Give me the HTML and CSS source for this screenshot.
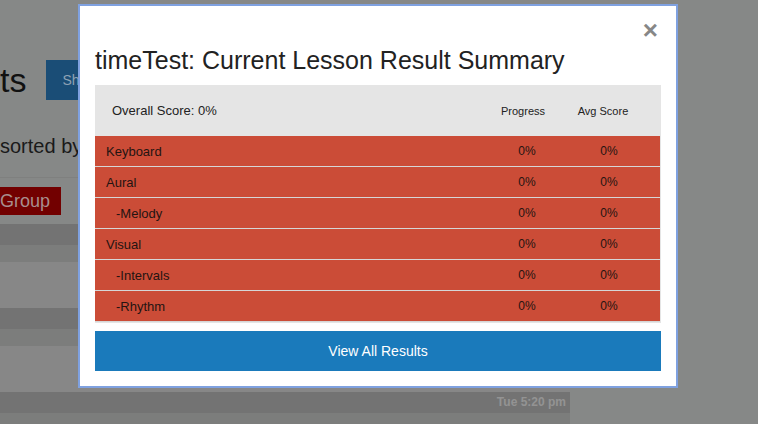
FILE: index.html
```html
<!DOCTYPE html>
<html>
<head>
<meta charset="utf-8">
<link rel="stylesheet" href="styles.css">
</head>
<body>
<div class="page">
  <div class="title-row">
    <h1 class="page-title">ts</h1>
    <button class="show-btn">Show</button>
  </div>
  <p class="sorted">sorted by</p>
  <div class="group-row"><span class="group-btn">Group</span></div>
  <div class="list">
    <div class="bar-dark"></div>
    <div class="bar-mid"></div>
    <div class="bar-body"></div>
    <div class="bar-dark"></div>
    <div class="bar-mid"></div>
    <div class="bar-body"></div>
    <div class="bar-dark stamp">Tue 5:20 pm</div>
    <div class="bar-mid"></div>
  </div>
</div>

<div class="modal">
  <div class="close-row"><span class="close">&times;</span></div>
  <h4 class="modal-title">timeTest: Current Lesson Result Summary</h4>
  <div class="results">
    <div class="res-head">
      <span class="overall">Overall Score: 0%</span>
      <span class="col">Progress</span>
      <span class="col">Avg Score</span>
    </div>
    <div class="res-row"><span class="name">Keyboard</span><span class="val">0%</span><span class="val">0%</span></div>
    <div class="res-row"><span class="name">Aural</span><span class="val">0%</span><span class="val">0%</span></div>
    <div class="res-row"><span class="name sub">-Melody</span><span class="val">0%</span><span class="val">0%</span></div>
    <div class="res-row"><span class="name">Visual</span><span class="val">0%</span><span class="val">0%</span></div>
    <div class="res-row"><span class="name sub">-Intervals</span><span class="val">0%</span><span class="val">0%</span></div>
    <div class="res-row"><span class="name sub">-Rhythm</span><span class="val">0%</span><span class="val">0%</span></div>
  </div>
  <button class="view-all">View All Results</button>
</div>
</body>
</html>
```

FILE: styles.css
```css
html, body {
  margin: 0;
  padding: 0;
  background: #868887;
  font-family: "Liberation Sans", Arial, sans-serif;
  overflow: hidden;
  height: 424px;
}

.page {
  width: 570px;
}

.title-row {
  display: flex;
  align-items: center;
  margin-top: 60px;
  height: 40px;
}

.page-title {
  margin: 0 20px 0 0;
  font-size: 34px;
  font-weight: normal;
  color: #111;
  line-height: 40px;
}

.show-btn {
  height: 40px;
  width: 120px;
  border: none;
  background: #1a4d76;
  color: #8ea2b4;
  font-family: "Liberation Sans", Arial, sans-serif;
  font-size: 14px;
  text-align: left;
  padding: 0 0 0 16px;
}

.sorted {
  margin: 34px 0 0 0;
  font-size: 20px;
  line-height: 24px;
  color: #1a1a1a;
}

.group-row {
  margin-top: 19px;
  border-top: 1px solid #7f807f;
  padding-top: 9px;
}

.group-btn {
  display: inline-block;
  background: #720000;
  color: #a88e8e;
  font-size: 18px;
  line-height: 28px;
  padding: 0 11px 0 0;
}

.list {
  margin-top: 9px;
}

.bar-dark {
  height: 21px;
  background: #737373;
}

.bar-mid {
  height: 17px;
  background: #7c7d7c;
}

.bar-body {
  height: 46px;
  background: #878787;
}

.stamp {
  text-align: right;
  padding-right: 4px;
  font-size: 12px;
  font-weight: bold;
  line-height: 21px;
  color: #939393;
}

/* modal */
.modal {
  position: fixed;
  left: 78px;
  top: 4px;
  width: 600px;
  box-sizing: border-box;
  background: #fff;
  border: 2px solid #7fa1e0;
  padding: 15px;
}

.close-row {
  display: flex;
  justify-content: flex-end;
  height: 20px;
  padding-right: 3px;
}

.close {
  font-size: 26px;
  font-weight: bold;
  color: #878787;
  line-height: 18px;
  margin-top: 0;
}

.modal-title {
  margin: 6px 0 12px 0;
  font-size: 25px;
  font-weight: normal;
  line-height: 26px;
  color: #222;
}

.results {
  background: #e5e5e5;
  padding: 0 1px 1px 0;
}

.res-head {
  display: grid;
  grid-template-columns: 1fr 80px 80px;
  align-items: center;
  height: 51px;
  padding: 0 17px 0 17px;
  font-size: 11px;
  color: #222;
}

.res-head .overall {
  font-size: 13px;
}

.res-head .col {
  text-align: center;
}

.res-row {
  display: grid;
  grid-template-columns: 1fr 80px 80px;
  column-gap: 2px;
  align-items: center;
  height: 30px;
  padding: 0 11px 0 11px;
  background: #cb4c37;
  border-bottom: 1px solid #d6d6d6;
  font-size: 13px;
  color: #241412;
}

.res-row .name.sub {
  padding-left: 10px;
}

.res-row .val {
  font-size: 12px;
  text-align: center;
}

.view-all {
  display: block;
  width: 100%;
  height: 40px;
  margin-top: 8px;
  border: none;
  background: #1a7abb;
  color: #fff;
  font-family: "Liberation Sans", Arial, sans-serif;
  font-size: 14px;
}
```
